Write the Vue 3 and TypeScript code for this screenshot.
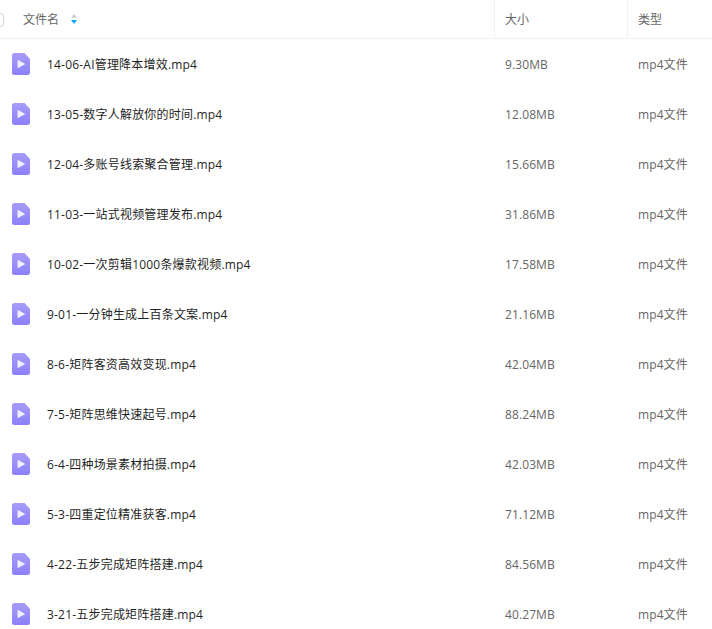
<script setup lang="ts">
interface FileRow {
  name: string;
  size: string;
}

const files: FileRow[] = [
  { name: '14-06-AI管理降本增效.mp4', size: '9.30MB' },
  { name: '13-05-数字人解放你的时间.mp4', size: '12.08MB' },
  { name: '12-04-多账号线索聚合管理.mp4', size: '15.66MB' },
  { name: '11-03-一站式视频管理发布.mp4', size: '31.86MB' },
  { name: '10-02-一次剪辑1000条爆款视频.mp4', size: '17.58MB' },
  { name: '9-01-一分钟生成上百条文案.mp4', size: '21.16MB' },
  { name: '8-6-矩阵客资高效变现.mp4', size: '42.04MB' },
  { name: '7-5-矩阵思维快速起号.mp4', size: '88.24MB' },
  { name: '6-4-四种场景素材拍摄.mp4', size: '42.03MB' },
  { name: '5-3-四重定位精准获客.mp4', size: '71.12MB' },
  { name: '4-22-五步完成矩阵搭建.mp4', size: '84.56MB' },
  { name: '3-21-五步完成矩阵搭建.mp4', size: '40.27MB' }
];
</script>

<template>
  <div class="page">
    <div class="head">
      <div class="col-name">
        <span class="check"></span>
        <span>文件名</span>
        <svg class="sort" width="6" height="10" viewBox="0 0 6 10">
          <path d="M3 0 L6 3.8 H0 Z" fill="#c8ccd2" />
          <path d="M3 10 L6 6 H0 Z" fill="#06a7ff" />
        </svg>
      </div>
      <div class="col-size">大小</div>
      <div class="col-type">类型</div>
    </div>
    <div v-for="f in files" :key="f.name" class="row">
      <div class="col-name">
        <svg class="icon" width="18" height="22" viewBox="0 0 18 22">
          <defs>
            <linearGradient id="vid" x1="0" y1="0" x2="0" y2="1">
              <stop offset="0" stop-color="#a79cf8" />
              <stop offset="1" stop-color="#8b80fb" />
            </linearGradient>
          </defs>
          <path d="M2.5 0 H12.5 L18 6 V19.5 A2.5 2.5 0 0 1 15.5 22 H2.5 A2.5 2.5 0 0 1 0 19.5 V2.5 A2.5 2.5 0 0 1 2.5 0 Z" fill="url(#vid)" />
          <path d="M6 7.5 L12.5 11 L6 14.5 Z" fill="#f1efff" stroke="#f1efff" stroke-width="1" stroke-linejoin="round" />
        </svg>
        <span class="fname">{{ f.name }}</span>
      </div>
      <div class="col-size">{{ f.size }}</div>
      <div class="col-type">mp4文件</div>
    </div>
  </div>
</template>

<style>
html, body {
  margin: 0;
  background: #fff;
  overflow: hidden;
}
</style>

<style scoped>
.page {
  width: 712px;
  height: 629px;
  overflow: hidden;
  font-family: "Open Sans", "Noto Sans CJK SC", sans-serif;
  font-size: 12px;
  color: #666;
}
.head {
  display: flex;
  height: 38px;
  border-bottom: 1px solid #f1f2f4;
  align-items: stretch;
  color: #666;
}
.head > div {
  display: flex;
  align-items: center;
}
.head .col-size,
.head .col-type {
  border-left: 1px solid #f1f2f4;
  padding-left: 10px;
}
.col-name {
  width: 494px;
  box-sizing: border-box;
  position: relative;
  padding-left: 23px;
}
.col-size {
  width: 133px;
  box-sizing: border-box;
}
.col-type {
  flex: 1;
}
.check {
  position: absolute;
  left: -10px;
  top: 13px;
  width: 12px;
  height: 12px;
  border: 1px solid #d4d7de;
  border-radius: 3px;
}
.sort {
  margin-left: 12px;
}
.row {
  display: flex;
  align-items: center;
  height: 50px;
}
.row .col-name {
  display: flex;
  align-items: center;
  padding-left: 12px;
}
.row .col-size,
.row .col-type {
  padding-left: 11px;
  letter-spacing: 0.1px;
}
.icon {
  flex: none;
}
.fname {
  margin-left: 17px;
  color: #1f1f1f;
  letter-spacing: 0.2px;
}
</style>
